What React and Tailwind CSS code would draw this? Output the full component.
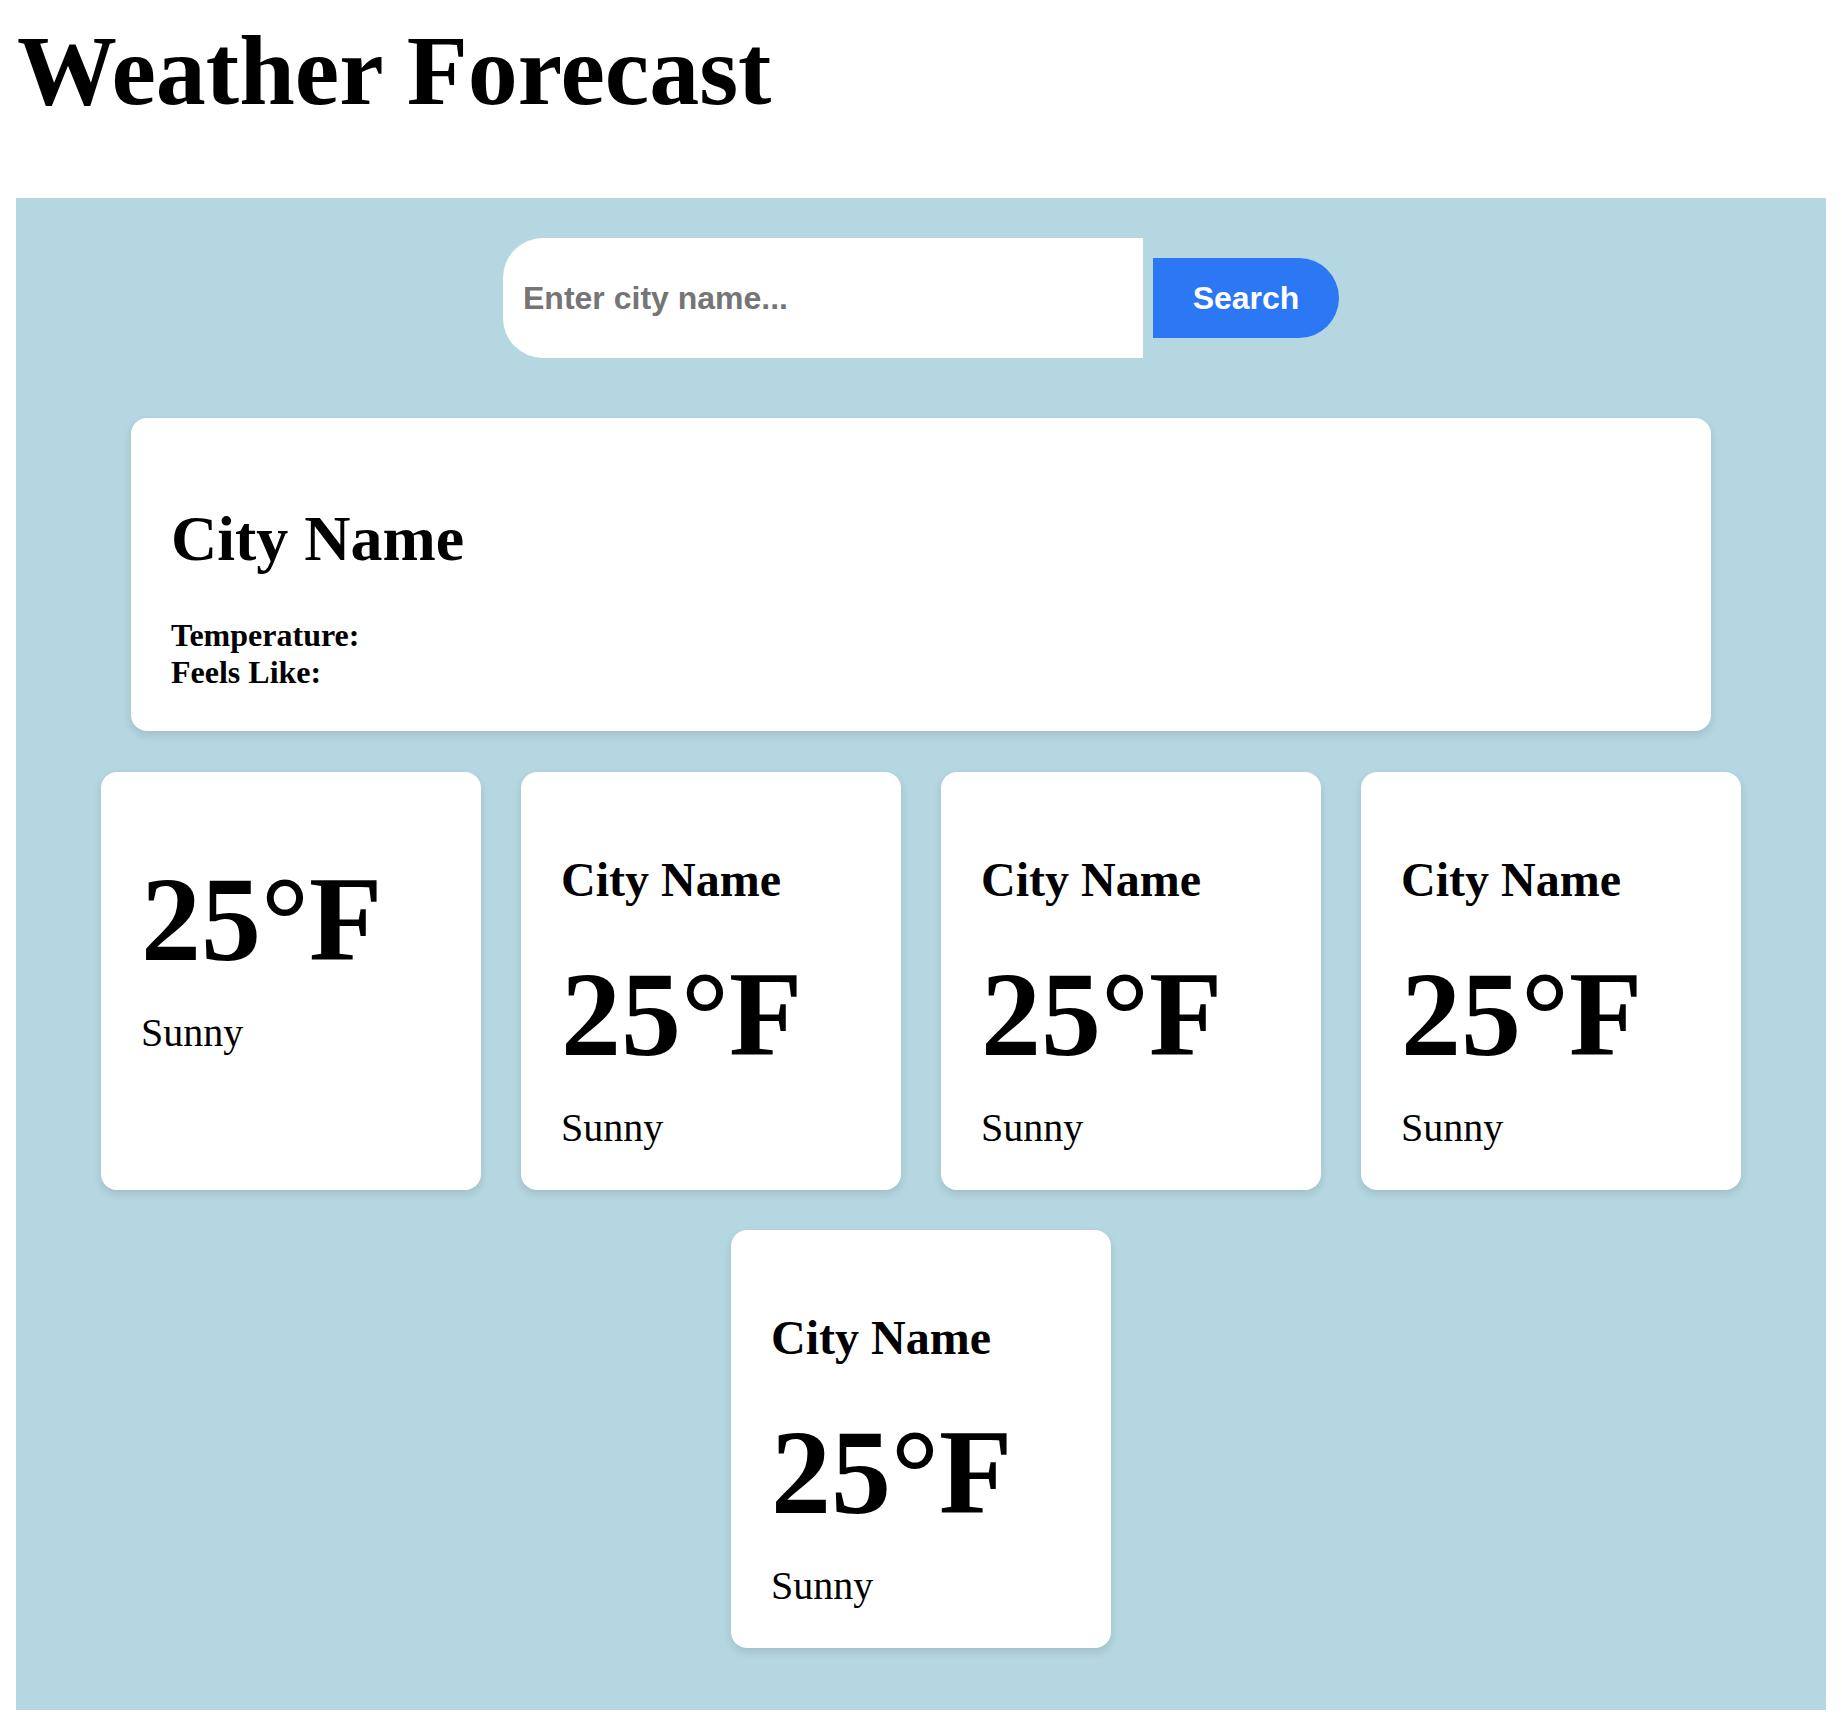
import React from "react";

const forecast = [
  { city: null, temp: "25°F", desc: "Sunny" },
  { city: "City Name", temp: "25°F", desc: "Sunny" },
  { city: "City Name", temp: "25°F", desc: "Sunny" },
  { city: "City Name", temp: "25°F", desc: "Sunny" },
  { city: "City Name", temp: "25°F", desc: "Sunny" },
];

function ForecastCard({ city, temp, desc }) {
  return (
    <div className="w-[380px] h-[418px] bg-white rounded-2xl shadow-[0_4px_8px_rgba(0,0,0,0.12)] px-10 pt-[80px]">
      {city && (
        <h3 className="text-[48px] leading-[56px] font-bold mb-[39px]">{city}</h3>
      )}
      <div className="text-[120px] leading-[136px] font-bold mb-[22px]">{temp}</div>
      <p className="text-[40px] leading-[46px]">{desc}</p>
    </div>
  );
}

export default function App() {
  return (
    <div className="min-h-[1724px] bg-white text-black font-['Liberation_Serif','Times_New_Roman',serif] px-4 pb-4">
      <h1 className="text-[100px] leading-[115px] font-bold pt-[13px] ml-[1px] mb-[70px]">
        Weather Forecast
      </h1>

      <div className="bg-[#b5d7e2] pt-10 pb-[62px]">
        <div className="flex items-center justify-center">
          <input
            type="text"
            placeholder="Enter city name..."
            className="w-[640px] h-[120px] bg-white rounded-l-[40px] px-5 text-[32px] font-bold font-['Liberation_Sans',Arial,sans-serif] placeholder:text-[#757575] outline-none"
          />
          <button className="ml-[10px] w-[186px] h-[80px] bg-[#2c77f4] text-white rounded-r-full text-[32px] font-bold font-['Liberation_Sans',Arial,sans-serif]">
            Search
          </button>
        </div>

        <div className="mx-auto mt-[60px] w-[1580px] bg-white rounded-2xl shadow-[0_4px_8px_rgba(0,0,0,0.12)] px-10 pt-[84px] pb-10">
          <h2 className="text-[64px] leading-[74px] font-bold mb-[41px]">City Name</h2>
          <div className="text-[32px] leading-[37px] font-bold">Temperature:</div>
          <div className="text-[32px] leading-[37px] font-bold">Feels Like:</div>
        </div>

        <div className="mt-[41px] flex flex-wrap justify-center gap-10">
          {forecast.map((f, i) => (
            <ForecastCard key={i} {...f} />
          ))}
        </div>
      </div>
    </div>
  );
}
